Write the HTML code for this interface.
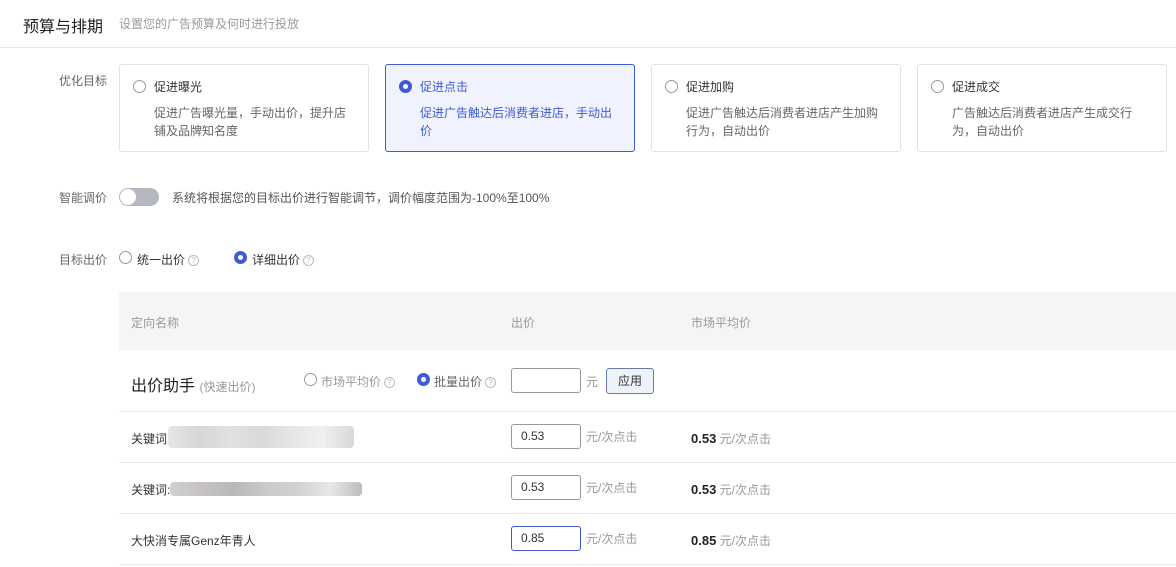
<!DOCTYPE html><html><head><meta charset="utf-8"><style>
*{margin:0;padding:0;box-sizing:border-box}
body{width:1176px;height:567px;overflow:hidden;background:#fff;font-family:"Liberation Sans","Noto Sans CJK SC",sans-serif;font-size:12px;color:#333;position:relative}
.a{position:absolute;white-space:nowrap}
.lbl{color:#666;font-size:12px}
.card{position:absolute;top:64px;width:250px;height:88px;border:1px solid #e2e2e2;border-radius:3px;background:#fff}
.card.on{border-color:#3e5bd5;background:#f0f3fd}
.rd{position:absolute;width:13px;height:13px;border:1px solid #999;border-radius:50%;background:#fff}
.rd.on{border:4px solid #3e5bd5}
.card .rd{left:13px;top:15px}
.card .t{position:absolute;left:34px;top:13px;font-size:12px;color:#333}
.card .d{position:absolute;left:34px;top:39px;width:200px;line-height:18px;color:#666;white-space:normal}
.card.on .t,.card.on .d{color:#3e5bd5}
.q{display:inline-block;width:11px;height:11px;border:1px solid #bbb;border-radius:50%;color:#bbb;font-size:8px;line-height:9px;text-align:center;vertical-align:middle;margin-left:3px}
.inp{position:absolute;left:511px;width:70px;height:25px;border:1px solid #999;border-radius:3px;font-size:12px;line-height:23px;padding-left:9px;color:#333;background:#fff}
.hl{position:absolute;left:119px;right:0;height:1px;background:#e6e6e6}
.g{color:#999}
.blur{position:absolute;height:22px;border-radius:4px}
</style></head><body>
<div class="a" style="left:23px;top:13px;font-size:16px;color:#222">预算与排期</div>
<div class="a" style="left:119px;top:15px;font-size:12px;color:#999">设置您的广告预算及何时进行投放</div>
<div style="position:absolute;left:0;right:0;top:47px;height:1px;background:#e6e6e6"></div>

<div class="a lbl" style="left:59px;top:72px">优化目标</div>
<div class="card" style="left:119px"><div class="rd"></div><div class="t">促进曝光</div><div class="d">促进广告曝光量，手动出价，提升店铺及品牌知名度</div></div>
<div class="card on" style="left:385px"><div class="rd on"></div><div class="t">促进点击</div><div class="d">促进广告触达后消费者进店，手动出价</div></div>
<div class="card" style="left:651px"><div class="rd"></div><div class="t">促进加购</div><div class="d">促进广告触达后消费者进店产生加购行为，自动出价</div></div>
<div class="card" style="left:917px"><div class="rd"></div><div class="t">促进成交</div><div class="d">广告触达后消费者进店产生成交行为，自动出价</div></div>

<div class="a lbl" style="left:59px;top:189px">智能调价</div>
<div style="position:absolute;left:119px;top:188px;width:40px;height:18px;border-radius:9px;background:#b5b7c0"><div style="position:absolute;left:1px;top:1px;width:16px;height:16px;border-radius:50%;background:#fff"></div></div>
<div class="a" style="left:172px;top:189px;color:#555">系统将根据您的目标出价进行智能调节，调价幅度范围为-100%至100%</div>

<div class="a lbl" style="left:59px;top:251px">目标出价</div>
<div class="rd" style="left:119px;top:251px"></div>
<div class="a" style="left:137px;top:251px">统一出价<span class="q">?</span></div>
<div class="rd on" style="left:234px;top:251px"></div>
<div class="a" style="left:252px;top:251px">详细出价<span class="q">?</span></div>

<div style="position:absolute;left:119px;right:0;top:292px;height:58px;background:#f5f5f5"></div>
<div class="a g" style="left:131px;top:314px">定向名称</div>
<div class="a g" style="left:511px;top:314px">出价</div>
<div class="a g" style="left:691px;top:314px">市场平均价</div>

<div class="a" style="left:131px;top:372px;font-size:16px;color:#222">出价助手 <span style="font-size:12px;color:#999">(快速出价)</span></div>
<div class="rd" style="left:304px;top:373px"></div>
<div class="a g" style="left:321px;top:373px">市场平均价<span class="q">?</span></div>
<div class="rd on" style="left:417px;top:373px"></div>
<div class="a" style="left:434px;top:373px;color:#666">批量出价<span class="q">?</span></div>
<div class="inp" style="top:368px"></div>
<div class="a g" style="left:586px;top:373px">元</div>
<div style="position:absolute;left:606px;top:368px;width:48px;height:26px;border:1px solid #6b7aa8;border-radius:3px;background:#eef2fb;text-align:center;line-height:24px;color:#333">应用</div>
<div class="hl" style="top:411px"></div>

<div class="a" style="left:131px;top:430px">关键词</div>
<div class="blur" style="left:168px;top:426px;width:186px;background:linear-gradient(90deg,#e6e6e8,#d6d6d9,#e2e0e0,#d9d9dc,#e6e6e6,#f0f0f0,#d8d8da)"></div>
<div class="inp" style="top:424px">0.53</div>
<div class="a g" style="left:586px;top:428px">元/次点击</div>
<div class="a" style="left:691px;top:430px"><b style="font-size:13px;color:#222">0.53</b> <span class="g">元/次点击</span></div>
<div class="hl" style="top:462px"></div>

<div class="a" style="left:131px;top:481px">关键词:</div>
<div class="blur" style="left:170px;top:482px;width:192px;height:14px;background:linear-gradient(90deg,#d0d0d2,#c6c2c2,#b8b8bb,#cacaca,#d2d2d2,#e8e8e8,#bcbcbe)"></div>
<div class="inp" style="top:475px">0.53</div>
<div class="a g" style="left:586px;top:479px">元/次点击</div>
<div class="a" style="left:691px;top:481px"><b style="font-size:13px;color:#222">0.53</b> <span class="g">元/次点击</span></div>
<div class="hl" style="top:513px"></div>

<div class="a" style="left:131px;top:532px">大快消专属Genz年青人</div>
<div class="inp" style="top:526px;border-color:#3e5bd5">0.85</div>
<div class="a g" style="left:586px;top:530px">元/次点击</div>
<div class="a" style="left:691px;top:532px"><b style="font-size:13px;color:#222">0.85</b> <span class="g">元/次点击</span></div>
<div class="hl" style="top:564px"></div>
</body></html>
